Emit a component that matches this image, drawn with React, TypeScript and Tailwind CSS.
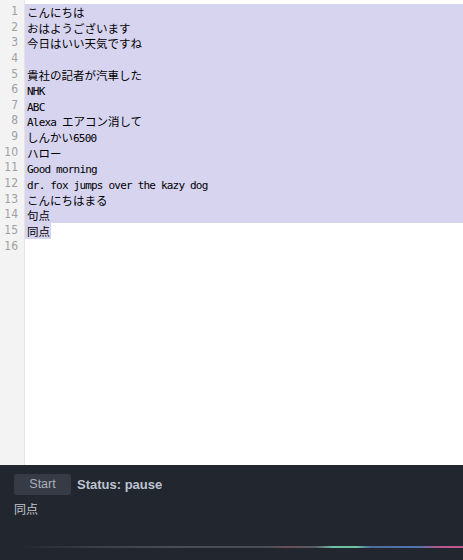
import React from "react";

const lines = [
  "こんにちは",
  "おはようございます",
  "今日はいい天気ですね",
  "",
  "貴社の記者が汽車した",
  "NHK",
  "ABC",
  "Alexa エアコン消して",
  "しんかい6500",
  "ハロー",
  "Good morning",
  "dr. fox jumps over the kazy dog",
  "こんにちはまる",
  "句点",
  "同点",
  "",
];

// ascii runs get the narrow mono face, the rest the CJK face
function Runs({ text }: { text: string }) {
  const parts = text.match(/[\x00-\x7f]+|[^\x00-\x7f]+/g) ?? [];
  return (
    <>
      {parts.map((p, i) =>
        /^[\x00-\x7f]+$/.test(p) ? (
          <span key={i} className="font-['DejaVu_Sans_Mono',monospace] text-[11px] tracking-[-0.8px] whitespace-pre">
            {p}
          </span>
        ) : (
          <span key={i} className="font-['Noto_Sans_CJK_JP',sans-serif] text-[11.5px]">
            {p}
          </span>
        )
      )}
    </>
  );
}

export default function App() {
  return (
    <div className="w-[463px] h-[560px] flex flex-col bg-white overflow-hidden">
      <div className="h-[465px] flex">
        <div className="w-[25px] shrink-0 bg-[#f3f3f3] border-r border-[#e4e4e4] pt-[4px]">
          {lines.map((_, i) => (
            <div
              key={i}
              className="h-[15.65px] leading-[15.65px] pr-[6px] text-right text-[12px] text-[#a0a0a0] font-['DejaVu_Sans_Condensed','Liberation_Sans',sans-serif]"
            >
              {i + 1}
            </div>
          ))}
        </div>
        <div className="flex-1 pt-[4px]">
          {lines.map((l, i) => (
            <div key={i} className="h-[15.65px] leading-[15.65px] text-[#000] flex">
              {i < 14 ? (
                <div className="flex-1 bg-[#d7d4f0] pl-[2px]">
                  <Runs text={l} />
                </div>
              ) : i === 14 ? (
                <div className="pl-[2px] bg-[#d7d4f0] pr-[1px]">
                  <Runs text={l} />
                </div>
              ) : (
                <div className="pl-[2px]">
                  <Runs text={l} />
                </div>
              )}
            </div>
          ))}
        </div>
      </div>
      <div className="flex-1 bg-[#22262e] flex flex-col px-[14px] pt-[9px] font-['Liberation_Sans',Arial,sans-serif]">
        <div className="flex items-center gap-[6px]">
          <button className="w-[57px] h-[21px] rounded-[3px] bg-[#363b45] text-[#a9b0bb] text-[12.5px]">
            Start
          </button>
          <span className="text-[13px] font-bold text-[#bcc4d1]">Status: pause</span>
        </div>
        <div className="mt-[5px] text-[12px] text-[#c2c6ce] font-['Noto_Sans_CJK_JP',sans-serif]">同点</div>
        <div className="mt-auto mb-[12px] -mx-[14px] h-[2px] bg-[linear-gradient(90deg,transparent_4%,#3a3e46_20%,#4a4e57_40%,#4a4e57_58%,#6a4e52_62%,#5a5a66_68%,#6fc1a5_72%,#6fc1a5_77%,#4f6c9a_80%,#4e75b3_90%,#b8568a_95%,#c25a8e_100%)]" />
      </div>
    </div>
  );
}
